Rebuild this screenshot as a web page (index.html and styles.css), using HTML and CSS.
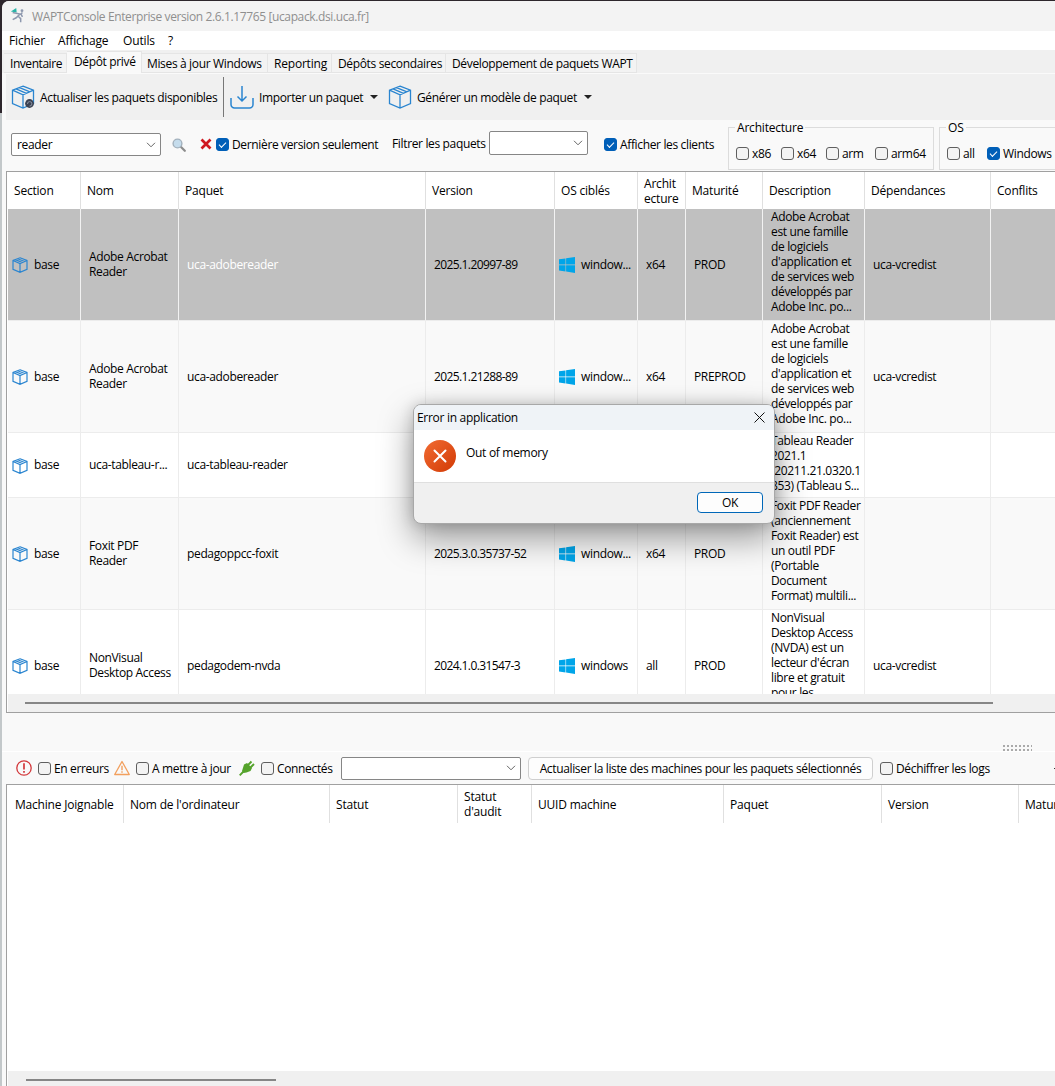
FILE: index.html
```html
<!DOCTYPE html>
<html lang="fr">
  <head>
    <meta charset="UTF-8" />
    <meta name="viewport" content="width=device-width, initial-scale=1.0" />
    <title>WAPTConsole Enterprise</title>
    <link rel="stylesheet" href="styles.css">
  </head>
  <body>
    <!-- shared icons -->
    <svg class="sprite" width="0" height="0">
      <symbol id="box" viewBox="0 0 24 24">
        <path d="M12 1.200 22.500 5.200v13.300L12 23 1.500 18.500V5.200Z M1.500 5.200 12 9.800 22.500 5.200 M12 9.800V23 M5 3.900l10.500 4.400 M8.500 2.600l10.500 4.200" />
      </symbol>
      <symbol id="win" viewBox="0 0 16 16">
        <path d="M0 2.300 6.500 1.400V7.600H0Z M7.100 1.300 16 0V7.600H7.100Z M0 8.200H6.500V14.500L0 13.600Z M7.100 8.200H16V16L7.100 14.600Z" />
      </symbol>
      <symbol id="chevron" viewBox="0 0 10 6">
        <path d="M1 .8l4 4 4-4" />
      </symbol>
    </svg>

    <div class="window">
      <div class="titlebar">
        <svg class="app-icon" viewBox="0 0 18 18">
          <path d="M1 4l6-4 .5 5Z" fill="#27b3a6" />
          <path d="M3 5l9 2 2-2M11 7l-4 4-4 2M9 9l3 3v4M12 6l2 4" fill="none" stroke="#8d98ae" stroke-width="1.700" />
          <circle cx="13.500" cy="3" r="1.600" fill="#8d98ae" />
        </svg>
        <span>WAPTConsole Enterprise version 2.6.1.17765 [ucapack.dsi.uca.fr]</span>
      </div>
      <div class="menubar">
        <span class="m1">Fichier</span>
        <span class="m2">Affichage</span>
        <span class="m3">Outils</span>
        <span>?</span>
      </div>
      <div class="tabs">
        <div class="tab t1">Inventaire</div>
        <div class="tab t2 active">Dépôt privé</div>
        <div class="tab t3">Mises à jour Windows</div>
        <div class="tab t4">Reporting</div>
        <div class="tab t5">Dépôts secondaires</div>
        <div class="tab t6">Développement de paquets WAPT</div>
      </div>
      <div class="toolbar">
        <div class="tool refresh">
          <svg class="box-big" viewBox="0 0 24 24">
            <use href="#box" />
            <circle cx="18.500" cy="18.500" r="4.400" fill="#3b4252" stroke="none" />
            <path d="M16.500 19a2.200 2.200 0 1 1 2 2" stroke="#8b93a3" stroke-width="1" />
          </svg>
          <span>Actualiser les paquets disponibles</span>
        </div>
        <div class="tool import">
          <svg class="download" viewBox="0 0 24 24">
            <path d="M12 1v15M7.500 11.500 12 16l4.500-4.500M1 13v6.500a3.500 3.500 0 0 0 3.500 3.500h15a3.500 3.500 0 0 0 3.500-3.500V13" />
          </svg>
          <span>Importer un paquet</span>
          <i class="caret"></i>
        </div>
        <div class="tool generate">
          <svg class="box-big"><use href="#box" /></svg>
          <span>Générer un modèle de paquet</span>
          <i class="caret"></i>
        </div>
      </div>

      <div class="filters">
        <div class="combo search">reader<svg class="chev"><use href="#chevron" /></svg></div>
        <svg class="loupe" viewBox="0 0 14 14">
          <path d="M8.500 8.500l4.300 4.300" stroke="#8c8c8c" stroke-width="2.200" stroke-linecap="round" />
          <circle cx="5.500" cy="5.500" r="4.400" fill="#c5dcec" stroke="#a3b1bd" stroke-width="1.400" />
        </svg>
        <svg class="cross" viewBox="0 0 12 12">
          <path d="M1.500 1.500l9 9M10.500 1.500l-9 9" stroke="#cf1820" stroke-width="2.700" />
        </svg>
        <label class="check last-version"><i class="tick on"></i>Dernière version seulement</label>
        <span class="filter-label">Filtrer les paquets</span>
        <div class="combo packages"><svg class="chev"><use href="#chevron" /></svg></div>
        <label class="check clients"><i class="tick on"></i>Afficher les clients</label>
        <div class="group arch">
          <span class="legend">Architecture</span>
          <label class="check c1"><i class="tick"></i>x86</label>
          <label class="check c2"><i class="tick"></i>x64</label>
          <label class="check c3"><i class="tick"></i>arm</label>
          <label class="check"><i class="tick"></i>arm64</label>
        </div>
        <div class="group os">
          <span class="legend">OS</span>
          <label class="check c4"><i class="tick"></i>all</label>
          <label class="check"><i class="tick on"></i>Windows</label>
        </div>
      </div>

      <div class="grid packages-grid">
        <div class="row head">
          <div>Section</div>
          <div>Nom</div>
          <div>Paquet</div>
          <div>Version</div>
          <div>OS ciblés</div>
          <div>Archit<br>ecture</div>
          <div>Maturité</div>
          <div>Description</div>
          <div>Dépendances</div>
          <div>Conflits</div>
        </div>
        <div class="rows">
          <div class="row selected">
            <div class="ico"><svg class="box"><use href="#box" /></svg>base</div>
            <div>Adobe Acrobat<br>Reader</div>
            <div class="pkg">uca-adobereader</div>
            <div class="ver">2025.1.20997-89</div>
            <div class="ico"><svg class="win"><use href="#win" /></svg>window...</div>
            <div>x64</div>
            <div>PROD</div>
            <div class="desc">Adobe Acrobat<br>est une famille<br>de logiciels<br>d'application et<br>de services web<br>développés par<br>Adobe Inc. po...</div>
            <div>uca-vcredist</div>
            <div></div>
          </div>
          <div class="row alt">
            <div class="ico"><svg class="box"><use href="#box" /></svg>base</div>
            <div>Adobe Acrobat<br>Reader</div>
            <div>uca-adobereader</div>
            <div class="ver">2025.1.21288-89</div>
            <div class="ico"><svg class="win"><use href="#win" /></svg>window...</div>
            <div>x64</div>
            <div>PREPROD</div>
            <div class="desc">Adobe Acrobat<br>est une famille<br>de logiciels<br>d'application et<br>de services web<br>développés par<br>Adobe Inc. po...</div>
            <div>uca-vcredist</div>
            <div></div>
          </div>
          <div class="row short">
            <div class="ico"><svg class="box"><use href="#box" /></svg>base</div>
            <div>uca-tableau-r...</div>
            <div>uca-tableau-reader</div>
            <div></div>
            <div></div>
            <div></div>
            <div></div>
            <div class="desc">Tableau Reader<br>2021.1<br>(20211.21.0320.1<br>853) (Tableau S...</div>
            <div></div>
            <div></div>
          </div>
          <div class="row alt">
            <div class="ico"><svg class="box"><use href="#box" /></svg>base</div>
            <div>Foxit PDF<br>Reader</div>
            <div>pedagoppcc-foxit</div>
            <div class="ver">2025.3.0.35737-52</div>
            <div class="ico"><svg class="win"><use href="#win" /></svg>window...</div>
            <div>x64</div>
            <div>PROD</div>
            <div class="desc">Foxit PDF Reader<br>(anciennement<br>Foxit Reader) est<br>un outil PDF<br>(Portable<br>Document<br>Format) multili...</div>
            <div></div>
            <div></div>
          </div>
          <div class="row">
            <div class="ico"><svg class="box"><use href="#box" /></svg>base</div>
            <div>NonVisual<br>Desktop Access</div>
            <div>pedagodem-nvda</div>
            <div class="ver">2024.1.0.31547-3</div>
            <div class="ico"><svg class="win"><use href="#win" /></svg>windows</div>
            <div>all</div>
            <div>PROD</div>
            <div class="desc">NonVisual<br>Desktop Access<br>(NVDA) est un<br>lecteur d'écran<br>libre et gratuit<br>pour les</div>
            <div>uca-vcredist</div>
            <div></div>
          </div>
        </div>
        <div class="scroll"><div class="thumb"></div></div>
      </div>

      <div class="splitter"><div class="grip"></div></div>

      <div class="hostbar">
        <svg class="h-icon" viewBox="0 0 16 16">
          <circle cx="8" cy="8" r="7.200" fill="none" stroke="#d3393c" stroke-width="1.300" />
          <path d="M8 3.300v6.200M8 11v1.800" stroke="#d3393c" stroke-width="1.700" />
        </svg>
        <label class="check errors"><i class="tick"></i>En erreurs</label>
        <svg class="h-icon" viewBox="0 0 16 16">
          <path d="M8 1.500 15.300 14.500H.7Z" fill="none" stroke="#f2a05e" stroke-width="1.300" stroke-linejoin="round" />
          <path d="M8 5.800v4.500M8 11.300v1.500" stroke="#f2a05e" stroke-width="1.400" />
        </svg>
        <label class="check update"><i class="tick"></i>A mettre à jour</label>
        <svg class="h-icon plug" viewBox="0 0 16 16">
          <path d="M5 4.500 8 3l5 5-1.500 3-4 1.500-3 .5L3 11Z" fill="#55a32c" />
          <path d="M.7 15.300 5 11M9 5l3.500-3.500M11.500 7.500 15 4" stroke="#55a32c" stroke-width="1.900" />
        </svg>
        <label class="check connected"><i class="tick"></i>Connectés</label>
        <div class="combo hosts"><svg class="chev"><use href="#chevron" /></svg></div>
        <button class="btn">Actualiser la liste des machines pour les paquets sélectionnés</button>
        <label class="check logs"><i class="tick"></i>Déchiffrer les logs</label>
        <span class="more"></span>
      </div>

      <div class="grid hosts-grid">
        <div class="row head">
          <div>Machine Joignable</div>
          <div>Nom de l'ordinateur</div>
          <div>Statut</div>
          <div>Statut<br>d'audit</div>
          <div>UUID machine</div>
          <div>Paquet</div>
          <div>Version</div>
          <div>Maturité</div>
        </div>
        <div class="empty"></div>
        <div class="scroll"><div class="thumb"></div></div>
      </div>
    </div>

    <div class="dialog">
      <div class="dialog-title">
        <span>Error in application</span>
        <svg class="close" viewBox="0 0 11 11"><path d="M.5.5l10 10M10.500.5l-10 10" /></svg>
      </div>
      <div class="dialog-body">
        <svg class="error" viewBox="0 0 32 32">
          <defs>
            <linearGradient id="err" x1="0" y1="0" x2="1" y2="1">
              <stop offset="0" stop-color="#f16b32" />
              <stop offset="1" stop-color="#d23a05" />
            </linearGradient>
          </defs>
          <circle cx="16" cy="16" r="16" fill="url(#err)" />
          <path d="M10.500 10.500l11 11M21.500 10.500l-11 11" stroke="#fff" stroke-width="2" stroke-linecap="round" />
        </svg>
        <span>Out of memory</span>
      </div>
      <div class="dialog-foot">
        <button class="ok">OK</button>
      </div>
    </div>
  </body>
</html>
```

FILE: styles.css
```css
* {
  box-sizing: border-box;
}
body {
  margin: 0;
  width: 1055px;
  height: 1086px;
  overflow: hidden;
  background: linear-gradient(#2d262c 113px, #c3c8ca 113px);
  font-family: "Open Sans", "Noto Sans", sans-serif;
  font-size: 12px;
  line-height: 15px;
  letter-spacing: -0.35px;
  color: #000;
  white-space: nowrap;
}
button {
  font: inherit;
  letter-spacing: inherit;
  color: inherit;
  padding: 0;
}
svg {
  flex: none;
}
.sprite {
  position: absolute;
}
.window {
  height: 1085px;
  margin: 1px 0 0 2px;
  border-top-left-radius: 7px;
  background: #f9f9f9;
  overflow: hidden;
  display: flex;
  flex-direction: column;
}
.titlebar {
  height: 30px;
  flex: none;
  display: flex;
  align-items: center;
  background: #f3f3f3;
  color: #8f8f8f;
  padding-left: 8px;
  gap: 6px;
  letter-spacing: -0.38px;
}
.app-icon {
  width: 16px;
  height: 16px;
}
.menubar {
  height: 19px;
  flex: none;
  background: #fff;
  display: flex;
  align-items: center;
  padding-left: 7px;
  letter-spacing: -0.15px;
}
.m1 {
  width: 49px;
}
.m2 {
  width: 65px;
}
.m3 {
  width: 45px;
}

/* tabs */
.tabs {
  height: 24px;
  flex: none;
  background: #f0f0f0;
  border-bottom: 1px solid #fafafa;
  display: flex;
  align-items: flex-end;
  padding-left: 2px;
}
.tab {
  height: 20px;
  background: #f3f3f3;
  border: 1px solid #e5e5e5;
  border-left: 0;
  line-height: 19px;
  padding-left: 6px;
}
.tab.active {
  height: 22px;
  background: #f9f9f9;
  border-bottom: 0;
  padding-left: 7px;
}
.t1 {
  width: 63px;
  letter-spacing: -0.45px;
}
.t2 {
  width: 75px;
}
.t3 {
  width: 126px;
  padding-left: 5px;
}
.t4 {
  width: 64px;
  letter-spacing: -0.2px;
}
.t5 {
  width: 114px;
}
.t6 {
  width: 191px;
}

/* toolbar */
.toolbar {
  height: 46px;
  flex: none;
  margin-left: 4px;
  background: #f0f0f0;
  display: flex;
}
.tool {
  display: flex;
  align-items: center;
  padding-left: 5px;
}
.tool svg {
  width: 24px;
  height: 24px;
  margin-right: 5px;
}
.box-big,
.box,
.download {
  fill: none;
  stroke: #2a85d0;
}
.box-big {
  stroke-width: 1.3;
}
.refresh {
  width: 218px;
  height: 40px;
  margin-top: 3px;
  border-right: 1px solid #777;
}
.refresh,
.import {
  flex: none;
}
.import {
  width: 158px;
  padding-left: 6px;
}
.generate {
  padding-left: 6px;
}
.download {
  stroke-width: 1.5;
}
.caret {
  border: 4px solid transparent;
  border-top: 4px solid #222;
  border-bottom: 0;
  margin-left: 7px;
}

/* filters */
.filters {
  height: 51px;
  flex: none;
  display: flex;
  padding-left: 9px;
}
.filters > * {
  flex: none;
}
.combo {
  background: #fff;
  border: 1px solid #868686;
  border-radius: 2px;
  display: flex;
  align-items: center;
  justify-content: space-between;
  padding: 0 4px 0 5px;
}
.chev {
  width: 10px;
  height: 6px;
  margin-left: auto;
  fill: none;
  stroke: #666;
}
.search {
  width: 150px;
  height: 23px;
  margin-top: 13px;
}
.loupe {
  width: 14px;
  height: 14px;
  margin: 18px 14px 0 11px;
}
.cross {
  width: 12px;
  height: 12px;
  margin: 18px 4px 0 0;
}
.check {
  display: flex;
  align-items: center;
  height: 15px;
}
.tick {
  width: 13px;
  height: 13px;
  flex: none;
  margin-right: 3px;
  background: #f3f3f3;
  border: 1px solid #5f5f5f;
  border-radius: 3px;
}
.tick.on {
  background: #005fb8;
  border-color: #005fb8;
}
.tick.on::after {
  content: "";
  display: block;
  width: 6px;
  height: 3px;
  margin: 3px 0 0 2px;
  border: solid #fff;
  border-width: 0 0 1px 1px;
  transform: rotate(-45deg);
}
.last-version {
  width: 176px;
  margin-top: 17px;
}
.filter-label {
  width: 97px;
  margin-top: 16px;
}
.packages {
  width: 99px;
  height: 24px;
  margin-top: 11px;
}
.clients {
  width: 124px;
  margin: 17px 0 0 16px;
}
.group {
  position: relative;
  height: 43px;
  margin-top: 7px;
  border: 1px solid #dcdcdc;
  display: flex;
  padding: 18px 0 0 7px;
}
.legend {
  position: absolute;
  top: -8px;
  left: 6px;
  padding: 0 2px;
  background: #f9f9f9;
  letter-spacing: -0.2px;
}
.arch {
  width: 206px;
}
.os {
  width: 140px;
  margin-left: 5px;
}
.c1,
.c2 {
  width: 45px;
}
.c3 {
  width: 49px;
}
.c4 {
  width: 40px;
}

/* grids */
.grid {
  flex: none;
  margin-left: 4px;
  border: 1px solid #a0a0a0;
  border-right: 0;
  padding-left: 1px;
  background: #fff;
  overflow: hidden;
}
.row {
  display: grid;
  height: 112px;
}
.packages-grid {
  height: 542px;
}
.packages-grid .row {
  grid-template-columns: 73px 98px 247px 129px 83px 48px 77px 102px 126px 120px;
}
.hosts-grid .row {
  grid-template-columns: 116px 206px 128px 74px 192px 158px 137px 100px;
}
.row > div {
  display: flex;
  align-items: center;
  padding: 0 0 1px 8px;
  border-right: 1px solid #ececec;
  border-bottom: 1px solid #ececec;
}
.grid .head > div {
  padding: 0 0 0 6px;
  border-right-color: #e0e0e0;
  border-bottom: 0;
  letter-spacing: -0.2px;
}
.packages-grid .head {
  height: 37px;
}
.rows {
  height: 485px;
  overflow: hidden;
}
.alt {
  background: #f9f9f9;
}
.selected {
  background: #c0c0c0;
}
.selected > div {
  border-right-color: #f2f2f2;
}
.selected .pkg {
  color: #fff;
}
.row .ver {
  letter-spacing: -0.6px;
}
.short {
  height: 65px;
}
.row .desc {
  align-items: flex-start;
}
.row .ico {
  padding-left: 4px;
}
.box {
  width: 16px;
  height: 16px;
  margin: 2px 6px 0 0;
  stroke-width: 1.8;
}
.win {
  width: 16px;
  height: 16px;
  margin: 2px 6px 0 0;
  fill: #00a5e9;
}
.scroll {
  height: 18px;
  background: #f0f0f0;
  padding-top: 8px;
}
.thumb {
  width: 968px;
  height: 2px;
  margin-left: 17px;
  background: #868686;
}
.splitter {
  height: 39px;
  flex: none;
  padding: 32px 0 0 1001px;
  border-bottom: 1px solid #fff;
}
.grip {
  width: 29px;
  height: 6px;
  background: radial-gradient(circle at 1px 1px, #aaa 0.8px, transparent 1px) 0 0 / 4px 4px;
}

/* hosts */
.hostbar {
  height: 32px;
  flex: none;
  display: flex;
  align-items: center;
  padding-left: 14px;
}
.h-icon {
  width: 16px;
  height: 16px;
  margin-right: 6px;
}
.errors {
  width: 76px;
}
.update {
  width: 103px;
}
.connected {
  width: 80px;
}
.hosts {
  width: 180px;
  height: 23px;
}
.btn {
  width: 345px;
  height: 23px;
  margin: 0 7px;
  background: #fdfdfd;
  border: 1px solid #cfcfcf;
  border-radius: 4px;
}
.more {
  width: 1px;
  height: 1px;
  margin-left: auto;
  background: #333;
}
.hosts-grid {
  height: 320px;
}
.hosts-grid .head {
  height: 38px;
}
.hosts-grid .head > div:first-child {
  padding-left: 7px;
}
.empty {
  height: 248px;
}
.hosts-grid .thumb {
  width: 250px;
  margin-left: 18px;
}

/* message box */
.dialog {
  position: absolute;
  left: 413px;
  top: 404px;
  width: 362px;
  height: 120px;
  border: 1px solid #a8a8a8;
  border-radius: 8px;
  background: #f0f0f0;
  box-shadow: 0 14px 34px rgba(0, 0, 0, 0.4), 0 0 14px rgba(0, 0, 0, 0.16);
  overflow: hidden;
  letter-spacing: -0.3px;
}
.dialog-title {
  height: 25px;
  display: flex;
  align-items: center;
  justify-content: space-between;
  background: #eff3f7;
  padding: 0 9px 0 3px;
}
.close {
  width: 11px;
  height: 11px;
  fill: none;
  stroke: #111;
}
.dialog-body {
  height: 53px;
  display: flex;
  background: #fff;
  border-bottom: 1px solid #dfdfdf;
  padding: 10px 0 0 10px;
  gap: 10px;
}
.error {
  width: 32px;
  height: 32px;
}
.dialog-body span {
  margin-top: 5px;
}
.dialog-foot {
  display: flex;
  justify-content: flex-end;
  padding: 9px 11px 0 0;
}
.ok {
  width: 66px;
  height: 21px;
  background: #fdfdfd;
  border: 1px solid #0067b8;
  border-radius: 4px;
}
```
